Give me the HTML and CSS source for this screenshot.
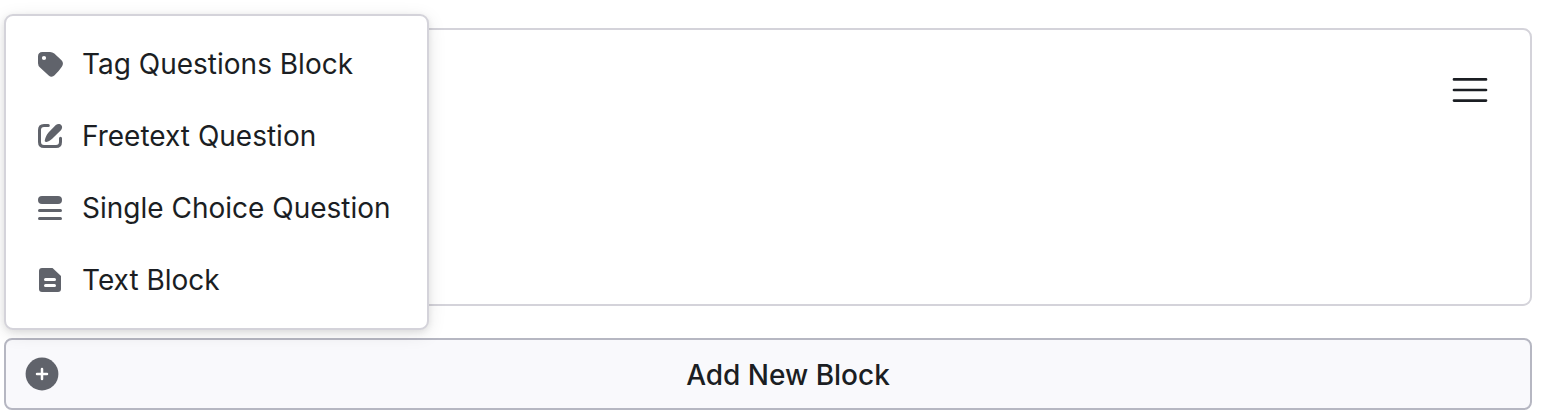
FILE: index.html
```html
<!DOCTYPE html>
<html lang="en">
<head>
<meta charset="utf-8">
<title>Block editor</title>
<link rel="stylesheet" href="styles.css">
</head>
<body>
<main class="editor">
  <section class="card">
    <button class="menu-toggle" aria-label="Options">
      <svg width="36" height="26" viewBox="0 0 36 26" fill="none" stroke="currentColor" stroke-width="2.7" stroke-linecap="round"><path d="M2 2.4H34M2 13H34M2 23.6H34"/></svg>
    </button>
  </section>
  <button class="add-block">
    <svg class="add-icon" width="34" height="34" viewBox="0 0 34 34"><circle cx="17" cy="17" r="16.4" fill="currentColor"/><path d="M17 12V22M12 17H22" stroke="#fff" stroke-width="2.5" stroke-linecap="round"/></svg>
    <span class="add-label">Add New Block</span>
  </button>
  <ul class="popup">
    <li class="item">
      <svg class="icon" viewBox="0 0 28 28"><path fill="currentColor" fill-rule="evenodd" d="M6.500 2H14Q16.500 2 18.300 3.600L25.500 10.200C27.300 12 27.500 14.500 25.800 16.800C24 19.600 21.500 22.300 18.600 25.300C16.800 27.100 14.600 27.100 12.700 25.500L4 17.600Q2 15.800 2 13.300V6.500Q2 2 6.500 2ZM8 5.900A2.100 2.100 0 1 0 8 10.100A2.100 2.100 0 1 0 8 5.900Z"/></svg>
      <span>Tag Questions Block</span>
    </li>
    <li class="item">
      <svg class="icon" viewBox="0 0 28 28"><path d="M12.300 3.500H8Q3.500 3.500 3.500 8V20Q3.500 24.500 8 24.500H20Q24.500 24.500 24.500 20V16.200" fill="none" stroke="currentColor" stroke-width="3" stroke-linecap="round"/><path fill="currentColor" d="M19.800 3.100C21.800 1.300 24.300 1.800 25.400 3.300C26.600 4.900 26.200 6.900 24.900 8.200L16.200 16.800C14.600 18.400 12.600 19.400 10.400 19.900C9.300 20.100 8.500 19.400 8.800 18.300C9.400 15.600 10.500 12.800 12.500 10.600Z"/></svg>
      <span>Freetext Question</span>
    </li>
    <li class="item">
      <svg class="icon" viewBox="0 0 28 28" fill="currentColor"><rect x="2" y="2" width="24" height="8" rx="4"/><rect x="2" y="15" width="24" height="3" rx="1.500"/><rect x="2" y="23" width="24" height="3" rx="1.500"/></svg>
      <span>Single Choice Question</span>
    </li>
    <li class="item">
      <svg class="icon" viewBox="0 0 28 28"><path fill="currentColor" d="M6 2H16.500L25 10V23Q25 26 22 26H6Q3 26 3 23V5Q3 2 6 2Z"/><path d="M9.500 13.500H18.500M9.500 19.500H18.500" stroke="#fff" stroke-width="3" stroke-linecap="round"/></svg>
      <span>Text Block</span>
    </li>
  </ul>
</main>
</body>
</html>
```
FILE: styles.css
```css
* { box-sizing: border-box; }
body {
  margin: 0;
  background: #fff;
  color: #1b1e23;
  font-family: Inter, "Liberation Sans", sans-serif;
  font-size: 28px;
}
button { font: inherit; color: inherit; }
.editor {
  position: relative;
  height: 416px;
  padding: 28px 18px 6px 4px;
  display: flex;
  flex-direction: column;
  gap: 32px;
}
.card {
  height: 278px;
  border: 2px solid #d4d3da;
  border-radius: 9px;
  display: flex;
  justify-content: flex-end;
  align-items: flex-start;
  padding: 47px 42px;
}
.menu-toggle {
  display: flex;
  padding: 0;
  border: 0;
  background: none;
}
.add-block {
  height: 72px;
  padding: 0 19px;
  border: 2px solid #b6b7c2;
  border-radius: 8px;
  background: #f9f9fc;
  display: grid;
  grid-template-columns: 34px 1fr 34px;
  align-items: center;
}
.add-icon { display: block; color: #60636b; }
.add-label {
  font-weight: 500;
  line-height: 36px;
  padding-top: 2px;
  margin-left: 40px;
}
.popup {
  position: absolute;
  left: 4px;
  top: 14px;
  width: 425px;
  margin: 0;
  padding: 12px 30px;
  list-style: none;
  background: #fff;
  border: 2px solid #d4d3da;
  border-radius: 9px;
  box-shadow: 0 4px 18px rgba(0, 0, 0, .1), 0 2px 6px rgba(0, 0, 0, .08);
}
.item {
  height: 72px;
  display: flex;
  align-items: center;
  gap: 18px;
  white-space: nowrap;
}
.icon { width: 28px; height: 28px; flex: none; color: #60636b; }
```
